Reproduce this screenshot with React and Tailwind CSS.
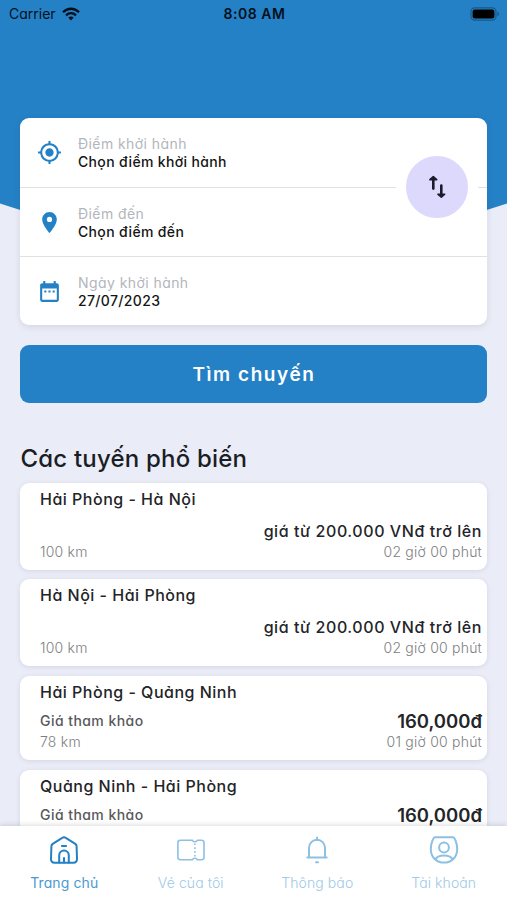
import { MdDateRange, MdMyLocation, MdPlace } from "react-icons/md";

const fields = [
  { label: "Điểm khởi hành", value: "Chọn điểm khởi hành", icon: MdMyLocation, row: "h-[70px] border-b" },
  { label: "Điểm đến",       value: "Chọn điểm đến",       icon: MdPlace,      row: "h-[69px] border-b" },
  { label: "Ngày khởi hành", value: "27/07/2023",          icon: MdDateRange,  row: "h-[68px]" },
];

const routes = [
  { name: "Hải Phòng - Hà Nội",     price: "giá từ 200.000 VNđ trở lên", km: "100 km", time: "02 giờ 00 phút" },
  { name: "Hà Nội - Hải Phòng",     price: "giá từ 200.000 VNđ trở lên", km: "100 km", time: "02 giờ 00 phút" },
  { name: "Hải Phòng - Quảng Ninh", price: "160,000đ", note: "Giá tham khảo", km: "78 km", time: "01 giờ 00 phút" },
  { name: "Quảng Ninh - Hải Phòng", price: "160,000đ", note: "Giá tham khảo" },
];

function WifiIcon() {
  return (
    <svg width="18" height="14" viewBox="0 0 18 14" fill="none" stroke="#03101c" strokeWidth="2.3">
      <path d="M1 5.2C5.6 .6 12.4 .6 17 5.2" />
      <path d="M4 8.3c2.9-2.8 7.1-2.8 10 0" />
      <path d="M6.3 10.6c1.6-1.5 3.8-1.5 5.4 0L9 13.4z" fill="#03101c" stroke="none" />
    </svg>
  );
}

function BatteryIcon() {
  return (
    <svg width="30" height="14" viewBox="0 0 30 14">
      <rect x="1" y=".8" width="25" height="12.4" rx="3.6" fill="none" stroke="#175a8c" strokeWidth="1.2" />
      <rect x="2.6" y="2.4" width="21.8" height="9.2" rx="2" fill="#000" />
      <path d="M27.4 4.8c2.2.7 2.2 3.7 0 4.4z" fill="#175a8c" />
    </svg>
  );
}

function SwapIcon() {
  return (
    <svg width="24" height="24" viewBox="0 0 24 24" fill="none" stroke="#1c1b2b" strokeWidth="2.6" strokeLinecap="round" strokeLinejoin="round">
      <path d="M8.3 13.6V4" />
      <path d="M8.3 1.7 4.9 4.7h6.8z" fill="#1c1b2b" strokeWidth="1.6" />
      <path d="M16.3 10.5v10" />
      <path d="m16.3 22.2-3.4-3h6.8z" fill="#1c1b2b" strokeWidth="1.6" />
    </svg>
  );
}

function HomeIcon() {
  return (
    <svg width="30" height="30" viewBox="0 0 30 30" fill="none" stroke="#2481c5" strokeWidth="2" strokeLinecap="round" strokeLinejoin="round">
      <path d="M13.2 2.8 3.7 8.9a3 3 0 0 0-1.3 2.3L2 24c0 2.4 1.2 3.8 3.6 3.8h18.8c2.4 0 3.6-1.4 3.6-3.8l-.4-12.8a3 3 0 0 0-1.3-2.3l-9.5-6.1a3.2 3.2 0 0 0-3.6 0z" />
      <path d="M10.2 27.6v-7.3a4.8 4.8 0 0 1 9.6 0v7.3M15 23v4.6M12.9 10.9h4.2" />
    </svg>
  );
}

function TicketIcon() {
  return (
    <svg width="30" height="30" viewBox="0 0 30 30" fill="none" stroke="#8ec0e4" strokeWidth="1.6" strokeLinejoin="round">
      <path d="M4.3 5.3h12.2c.5 2 4.2 2 4.8 0h4.3c1.6 0 2.4.8 2.4 2.4v14.6c0 1.6-.8 2.4-2.4 2.4h-4.3c-.6-2-4.3-2-4.8 0H4.3c-1.6 0-2.4-.8-2.4-2.4V7.7c0-1.6.8-2.4 2.4-2.4z" />
      <path d="M18.9 8.5v14" strokeDasharray="1.6 2.2" />
    </svg>
  );
}

function BellIcon() {
  return (
    <svg width="30" height="30" viewBox="0 0 30 30" fill="none" stroke="#8ec0e4" strokeWidth="2" strokeLinecap="round" strokeLinejoin="round">
      <path d="M15 2.5V5M7 22V12.8a8 8 0 0 1 16 0V22M5.3 22.5h19.4M14 27.3h2" />
    </svg>
  );
}

function UserIcon() {
  return (
    <svg width="30" height="30" viewBox="0 0 30 30" fill="none" stroke="#8ec0e4" strokeWidth="2" strokeLinecap="round" strokeLinejoin="round">
      <path d="M6 2.2h18C25.5 2.2 28.2 8 28.2 14.2 28.200 22.300 22.200 27.600 15 27.600S1.800 22.300 1.800 14.200C1.800 8 4.500 2.200 6 2.200z" />
      <circle cx="15" cy="12.5" r="4.9" />
      <path d="M6.5 24.5c2.2-5.300 14.800-5.300 17 0" />
    </svg>
  );
}

const tabs = [
  { label: "Trang chủ",  icon: HomeIcon, active: true },
  { label: "Vé của tôi", icon: TicketIcon },
  { label: "Thông báo",  icon: BellIcon },
  { label: "Tài khoản",  icon: UserIcon },
];

function RouteCard({ route }) {
  return (
    <div className={`flex shrink-0 flex-col rounded-[9px] bg-white pl-[19.6px] pr-[5.4px] shadow-[0_1px_5px_rgba(60,60,90,0.13)] ${route.note ? "h-[84.5px]" : "h-[87px]"}`}>
      <p className="mt-[5px] text-[16px] font-medium leading-[22px] tracking-[0.5px] text-[#232427]">{route.name}</p>
      <div className={`flex items-center justify-between leading-[22px] ${route.note ? "mt-[7px]" : "mt-[10px]"}`}>
        <span className="text-[14px] font-medium tracking-[0.45px] text-[#58595c]">{route.note}</span>
        <span className={`text-[#232529] ${route.note ? "text-[18.5px] font-semibold" : "text-[16px] font-medium tracking-[0.57px]"}`}>{route.price}</span>
      </div>
      <div className="flex items-center justify-between text-[14px] font-light leading-5 tracking-[0.22px] text-[#7d7e80]">
        <span>{route.km}</span>
        <span>{route.time}</span>
      </div>
    </div>
  );
}

export default function App() {
  return (
    <div className="relative flex h-[900px] w-[507px] flex-col overflow-hidden bg-[#eaedf7] font-[Inter,'Noto_Sans',sans-serif] [font-feature-settings:'cv11']">
      {/* Curved blue header */}
      <svg className="absolute left-0 top-0" width="507" height="260" viewBox="0 0 507 260">
        <path d="M0 0h507v203.5Q253.5 290 0 203.5z" fill="#2481c5" />
      </svg>

      {/* Status bar */}
      <header className="relative grid h-[27px] shrink-0 grid-cols-3 items-center pl-[9px] pr-[7px] text-[14px] text-[#03101c]">
        <div className="flex items-center gap-[6px]">
          <span>Carrier</span>
          <WifiIcon />
        </div>
        <span className="text-center font-semibold tracking-[0.5px]">8:08 AM</span>
        <div className="flex justify-end"><BatteryIcon /></div>
      </header>

      <main className="relative flex min-h-0 flex-1 flex-col overflow-hidden pl-[20.4px] pr-[19.6px] pt-[91px]">
        {/* Search form */}
        <section className="relative shrink-0 rounded-[9px] bg-white shadow-[0_2px_6px_rgba(60,60,90,0.12)]">
          {fields.map(({ label, value, icon: Icon, row }) => (
            <div key={label} className={`flex items-center border-[#dfe1e3] pl-[17px] ${row}`}>
              <Icon className="size-[25px] text-[#2481c5]" />
              <div className="ml-[15.6px] pt-px leading-[18px]">
                <p className="text-[14px] tracking-[0.43px] text-[#b3b6bc]">{label}</p>
                <p className="text-[14px] font-medium tracking-[0.35px] text-[#151515]">{value}</p>
              </div>
            </div>
          ))}
          <button className="absolute right-[9.4px] top-[28px] flex size-[82px] items-center justify-center rounded-full border-[10px] border-white bg-[#dcd9fd]">
            <SwapIcon />
          </button>
        </section>

        <button className="mt-5 h-[58px] shrink-0 rounded-[9px] bg-[#2481c5] pt-[2px] text-[19px] font-semibold tracking-[1.55px] text-white">
          Tìm chuyến
        </button>

        <h2 className="mt-[39px] text-[24px] font-medium leading-[34px] tracking-[0.2px] text-[#1b1e24]">Các tuyến phổ biến</h2>

        {/* Popular routes */}
        <div className="mt-[6.5px] flex flex-col gap-[9.5px]">
          {routes.map((r) => <RouteCard key={r.name} route={r} />)}
        </div>
      </main>

      {/* Tab bar */}
      <nav className="relative grid h-[74px] shrink-0 grid-cols-4 bg-white pl-px shadow-[0_-1px_5px_rgba(0,0,0,0.14)]">
        {tabs.map(({ label, icon: Icon, active }) => (
          <div key={label} className={`flex flex-col items-center pt-[9px] text-[14px] tracking-[0.1px] ${active ? "text-[#4c9ad2]" : "font-light text-[#9ec9e8]"}`}>
            <Icon />
            <span className="mt-[7.5px] leading-5">{label}</span>
          </div>
        ))}
      </nav>
    </div>
  );
}
